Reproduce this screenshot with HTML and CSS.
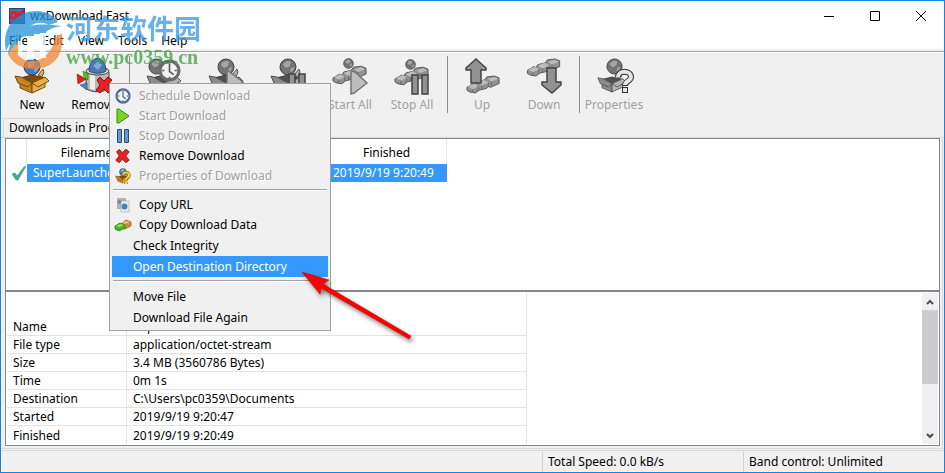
FILE: index.html
```html
<!DOCTYPE html>
<html lang="en">
<head>
    <meta charset="UTF-8">
    <meta name="viewport" content="width=device-width, initial-scale=1.0">
    <title>wxDownload Fast</title>
    <link rel="stylesheet" href="styles.css">
</head>
<body>
    <!-- shared icon parts -->
    <svg class="defs" aria-hidden="true">
        <symbol id="ball" viewBox="0 0 18 18">
            <circle class="ball" cx="9" cy="9" r="8"/>
            <path class="ball-light" d="M4 7c1-4 6-5 8-3l-1 4-4 2zM12 10l3-1-1 4-3 1z"/>
        </symbol>
        <symbol id="box" viewBox="0 0 36 26">
            <path class="box-dark" d="M6 10l12-3 13 3-13 6z"/>
            <path class="box-side" d="M6 11l12 5v9L6 20z"/>
            <path class="box-front" d="M18 16l13-6v9l-13 6z"/>
            <path class="box-side" d="M1 8l6 1 11 6-4 4-10-4z"/>
            <path class="box-front" d="M18 15l13-6 4 4-11 6z"/>
            <path class="box-front" d="M24 7l5-6 1 3-2 5z"/>
        </symbol>
        <symbol id="bricks" viewBox="0 0 36 20">
            <path class="brick" d="M1 13l7-4 2 1 2-3 8-2 2-3 8-1 5 2v6l-9 4-3-1-1 2-8 2-4 3-6-1-3-2z"/>
            <path class="brick-top" d="M2 12l7-3 4 3-6 3zM12 8l7-3 5 3-7 3zM23 4l7-2 4 2-7 3z"/>
            <path class="brick-line" d="M7 15v4M17 11v4M27 7v4M13 12v4M24 8v3"/>
        </symbol>
        <symbol id="clock" viewBox="0 0 22 22">
            <circle class="clock-rim" cx="11" cy="11" r="9"/>
            <path class="clock-hand" d="M11 4v8l4 3M11 17v2M4 11h2M16 11h2"/>
        </symbol>
        <symbol id="cross" viewBox="0 0 18 18">
            <path class="cross" d="M2 4l3-3 4 4 4-4 4 3-4 5 4 5-4 3-4-4-4 4-4-3 4-5z"/>
        </symbol>
        <symbol id="question" viewBox="0 0 20 26">
            <path class="q-edge" d="M4 9c0-7 13-7 13 0 0 4-6 4-6 9M11 19v6"/>
            <path class="q-fill" d="M4 9c0-7 13-7 13 0 0 4-6 4-6 8M11 20v4"/>
        </symbol>
    </svg>

    <div class="window">
        <header class="titlebar">
            <svg class="app-icon" viewBox="0 0 16 16">
                <rect x=".5" y=".5" width="15" height="15" fill="#4672ad" stroke="#26426d"/>
                <path d="M1 15L15 1v14z" fill="#315485"/>
                <path d="M2 3h4c4 0 3 8-1 8H1zM4 5L3 9c4 1 4-4 1-4zM9 4h6v2h-4v2h3v2h-3l-1 3H8z" fill="#f0161b" fill-rule="evenodd"/>
            </svg>
            <h1 class="title">wxDownload Fast</h1>
            <button class="win-btn" aria-label="Minimize"><svg viewBox="0 0 10 10"><path d="M0 5.5h10"/></svg></button>
            <button class="win-btn" aria-label="Maximize"><svg viewBox="0 0 10 10"><path d="M.5.5h9v9h-9z"/></svg></button>
            <button class="win-btn" aria-label="Close"><svg viewBox="0 0 10 10"><path d="M0 0l10 10M10 0L0 10"/></svg></button>
        </header>

        <nav class="menubar">
            <button>File</button>
            <button>Edit</button>
            <button>View</button>
            <button>Tools</button>
            <button>Help</button>
        </nav>

        <div class="toolbar">
            <button class="tool">
                <svg viewBox="0 0 36 36">
                    <use href="#box" y="10" width="36" height="26"/>
                    <use href="#ball" x="9" width="18" height="18"/>
                </svg>
                New
            </button>
            <button class="tool">
                <svg viewBox="0 0 36 36">
                    <path d="M10 14v16c4 5 19 5 23 0V14z" fill="#b9b9b9" stroke="#444"/>
                    <path d="M14 16v15l5 1V17z" fill="#eee"/>
                    <ellipse cx="21.5" cy="13" rx="11.5" ry="4" fill="#ddd" stroke="#444"/>
                    <path d="M13 13a8 12 0 0 1 17 0c-4 3-13 3-17 0z" fill="#4a78b5" stroke="#29466f"/>
                    <path d="M17 8l5-5 4 4-4 5z" fill="#7ea8d8"/>
                    <path d="M1 16l9 5-8 5z" fill="#dd2222" stroke="#7c1111" stroke-width=".6"/>
                    <path d="M7 13l5 3v6l-4-3z" fill="#58c51d" stroke="#286a08" stroke-width=".6"/>
                    <path d="M4 27l7-2v7z" fill="#4c86c8" stroke="#29466f" stroke-width=".6"/>
                    <use href="#cross" x="19" y="18" width="18" height="18"/>
                </svg>
                Remove
            </button>
            <hr class="tool-sep">
            <button class="tool" disabled>
                <svg viewBox="0 0 36 36">
                    <use href="#box" y="10" width="36" height="26"/>
                    <use href="#ball" x="2" width="17" height="17"/>
                    <use href="#clock" x="12" y="1" width="23" height="23"/>
                </svg>
                Schedule
            </button>
            <button class="tool" disabled>
                <svg viewBox="0 0 36 36">
                    <use href="#box" y="10" width="36" height="26"/>
                    <use href="#ball" x="9" width="18" height="18"/>
                    <path class="mark" d="M19 12l16 12-16 11z"/>
                </svg>
                Start
            </button>
            <button class="tool" disabled>
                <svg viewBox="0 0 36 36">
                    <use href="#box" y="10" width="36" height="26"/>
                    <use href="#ball" x="9" width="18" height="18"/>
                    <path class="mark-dark" d="M19 16h6v19h-6zM29 16h6v19h-6z"/>
                </svg>
                Stop
            </button>
            <button class="tool" disabled>
                <svg viewBox="0 0 36 36">
                    <use href="#ball" x="11" width="11" height="11"/>
                    <use href="#bricks" y="7" width="35" height="20"/>
                    <path class="mark" d="M19 13l4 1 12 11-13 10-3 1z"/>
                </svg>
                Start All
            </button>
            <button class="tool" disabled>
                <svg viewBox="0 0 36 36">
                    <use href="#ball" x="11" y="1" width="11" height="11"/>
                    <use href="#bricks" y="8" width="35" height="20"/>
                    <path class="mark-dark" d="M18 17h6v19h-6zM28 17h6v19h-6z"/>
                </svg>
                Stop All
            </button>
            <hr class="tool-sep">
            <button class="tool" disabled>
                <svg viewBox="0 0 36 36">
                    <use href="#bricks" x="2" y="17" width="34" height="19"/>
                    <path class="mark-dark" d="M12 1l10 9v2h-5v13H7V12H2v-2z"/>
                </svg>
                Up
            </button>
            <button class="tool" disabled>
                <svg viewBox="0 0 36 36">
                    <use href="#bricks" width="35" height="19"/>
                    <path class="mark-dark" d="M21 10h9v14h5v3l-9 8-10-8v-3h5z"/>
                </svg>
                Down
            </button>
            <hr class="tool-sep">
            <button class="tool" disabled>
                <svg viewBox="0 0 36 36">
                    <use href="#box" x="1" y="13" width="30" height="22"/>
                    <use href="#ball" x="10" width="17" height="17"/>
                    <use href="#question" x="18" y="10" width="20" height="26"/>
                </svg>
                Properties
            </button>
        </div>

        <div class="tabs">
            <button class="tab">Downloads in Progress</button>
        </div>

        <main class="content">
            <section class="list">
                <table class="downloads">
                    <thead>
                        <tr>
                            <th class="col-state"></th>
                            <th class="col-name">Filename</th>
                            <th class="col-mid"></th>
                            <th class="col-end">Finished</th>
                        </tr>
                    </thead>
                    <tbody>
                        <tr>
                            <td class="state">
                                <svg viewBox="0 0 14 14"><path d="M0 8l3-1 2 3 7-9 2-1-8 14H4z" fill="#3fae8e" stroke="#2b8c70" stroke-width=".5"/></svg>
                            </td>
                            <td>SuperLauncherSetu.rar</td>
                            <td></td>
                            <td>2019/9/19 9:20:49</td>
                        </tr>
                    </tbody>
                </table>
            </section>

            <section class="details">
                <table class="info">
                    <tbody>
                        <tr class="info-head"><th></th><td></td></tr>
                        <tr><th>Name</th><td>SuperLauncherSetu.rar</td></tr>
                        <tr><th>File type</th><td>application/octet-stream</td></tr>
                        <tr><th>Size</th><td>3.4 MB (3560786 Bytes)</td></tr>
                        <tr><th>Time</th><td>0m 1s</td></tr>
                        <tr><th>Destination</th><td>C:\Users\pc0359\Documents</td></tr>
                        <tr><th>Started</th><td>2019/9/19 9:20:47</td></tr>
                        <tr><th>Finished</th><td>2019/9/19 9:20:49</td></tr>
                    </tbody>
                </table>
                <div class="scrollbar">
                    <button aria-label="Scroll up"><svg viewBox="0 0 8 6"><path d="M1 5l3-3 3 3"/></svg></button>
                    <div class="thumb"></div>
                    <button aria-label="Scroll down"><svg viewBox="0 0 8 6"><path d="M1 1l3 3 3-3"/></svg></button>
                </div>
            </section>
        </main>

        <footer class="statusbar">
            <span class="status-main"></span>
            <span class="status">Total Speed: 0.0 kB/s</span>
            <span class="status">Band control: Unlimited</span>
        </footer>
    </div>

    <div class="watermark">
        <svg viewBox="0 0 58 58">
            <path d="M1 40C-4 18 10 0 32 0c10 0 17 5 21 11L44 14c-8-4-16-2-21 3C13 21 6 29 1 40z" fill="#2292d8"/>
            <path d="M13 22c8-9 23-10 44-7-7 1-13 3-16 6v26h-6V23h-6v24h-7V25c-4 0-8 3-10 7L3 44c1-9 4-16 10-22z" fill="#2292d8"/>
            <path d="M3 43c3-5 6-9 10-12v13c6 7 17 9 26 2 7-6 10-12 11-19 3-4 7-4 7-4 3 19-8 35-28 35C17 58 8 53 3 43z" fill="#f48634"/>
            <path d="M22 25h7v24h-7zM35 22h6v25h-6zM13 30h4v14h-4z" fill="#fff"/>
        </svg>
        <div>
            <div class="wm-name" lang="zh-CN">河东软件园</div>
            <div class="wm-url">www.pc0359.cn</div>
        </div>
    </div>

    <div class="context-menu">
        <button class="item" disabled>
            <svg viewBox="0 0 16 16"><use href="#clock" width="16" height="16"/></svg>
            Schedule Download
        </button>
        <button class="item" disabled>
            <svg viewBox="0 0 16 16"><path d="M2 1h2l10 7-10 7H2z" fill="#79d51e" stroke="#348b0d"/></svg>
            Start Download
        </button>
        <button class="item" disabled>
            <svg viewBox="0 0 16 16"><path d="M2.500 1.500h4v13h-4zM9.500 1.500h4v13h-4z" fill="#6798cf" stroke="#284d80"/></svg>
            Stop Download
        </button>
        <button class="item">
            <svg viewBox="0 0 16 16"><use href="#cross" width="15" height="16"/></svg>
            Remove Download
        </button>
        <button class="item" disabled>
            <svg viewBox="0 0 16 16">
                <use href="#box" y="4" width="15" height="12"/>
                <use href="#ball" x="4" width="8" height="8"/>
                <path d="M8 7c1-4 7-3 6 1-1 2-3 1-3 4M11 14v2" fill="none" stroke="#6b4c00" stroke-width="3"/>
                <path d="M8 7c1-4 7-3 6 1-1 2-3 1-3 4M11 14v2" fill="none" stroke="#ffd42a" stroke-width="2"/>
            </svg>
            Properties of Download
        </button>
        <hr>
        <button class="item">
            <svg viewBox="0 0 16 16">
                <path d="M2 1h9v11H2z" fill="#a9b2b8"/>
                <path d="M6 4h8v11H6z" fill="#e8edf1" stroke="#a2a9ae" stroke-width=".6"/>
                <circle cx="4.500" cy="5" r="2" fill="#728ca8"/>
                <circle cx="9.500" cy="9.500" r="3" fill="#4a7fbd"/>
            </svg>
            Copy URL
        </button>
        <button class="item">
            <svg viewBox="0 0 16 16">
                <path d="M6 7l5-4 5 2v4l-6 3-4-1z" fill="#d58b42" stroke="#86531d" stroke-width=".7"/>
                <path d="M7 6l4-2 4 1-4 2z" fill="#eebd82"/>
                <path d="M0 9l5-3 5 2v3l-6 3-4-2z" fill="#4db41d" stroke="#28700b" stroke-width=".7"/>
                <path d="M1 9l4-2 4 1-4 2z" fill="#92e35c"/>
            </svg>
            Copy Download Data
        </button>
        <button class="item plain">Check Integrity</button>
        <button class="item plain active">Open Destination Directory</button>
        <hr>
        <button class="item plain">Move File</button>
        <button class="item plain">Download File Again</button>
    </div>

    <svg class="pointer" viewBox="0 0 112 72" aria-hidden="true">
        <path d="M1 1l27 8-6 4 88 52-2 3-88-51-1 6z" fill="#f00" stroke="#c40000" stroke-width=".5"/>
    </svg>
</body>
</html>
```
FILE: styles.css
```css
* {
    box-sizing: border-box;
}
body {
    margin: 0;
    font: 12px/18px "Noto Sans", "Noto Sans CJK SC", sans-serif;
    color: #000;
}
button {
    margin: 0;
    padding: 0;
    border: none;
    background: none;
    font: inherit;
    color: inherit;
}
svg {
    display: block;
    overflow: visible;
}
.defs {
    position: absolute;
    width: 0;
    height: 0;
}
.window {
    display: flex;
    flex-direction: column;
    height: 100vh;
    min-height: 420px;
    border: 1px solid #1883d7;
    background: #f0f0f0;
}

/* title and menus */
.titlebar {
    display: flex;
    align-items: center;
    height: 30px;
    padding-left: 8px;
    background: #fff;
}
.app-icon {
    width: 16px;
    height: 16px;
}
.title {
    flex: 1;
    margin: 0 0 0 5px;
    font-size: 12px;
    font-weight: normal;
}
.win-btn {
    display: flex;
    align-items: center;
    justify-content: center;
    width: 46px;
    height: 30px;
}
.win-btn svg {
    width: 10px;
    height: 10px;
    fill: none;
    stroke: #000;
}
.menubar {
    display: flex;
    height: 21px;
    padding-left: 1px;
    background: #fff;
    border-bottom: 1px solid #a0a0a0;
    box-shadow: inset 0 -2px #f0f0f0;
}
.menubar button {
    padding: 0 7px;
}

/* toolbar */
.toolbar {
    display: flex;
    height: 66px;
    padding-top: 3px;
    border-top: 1px solid #fff;
}
.tool {
    display: flex;
    flex-direction: column;
    align-items: center;
    width: 62px;
    padding-top: 2px;
    white-space: nowrap;
}
.tool svg {
    width: 36px;
    height: 36px;
    margin-bottom: 2px;
}
.tool:disabled {
    color: #a0a0a0;
}
.tool:disabled svg {
    filter: grayscale(1);
}
.tool-sep {
    width: 1px;
    height: 57px;
    margin: 0 3px 0 4px;
    border: none;
    background: #8c8c8c;
}

/* icon colours */
.ball { fill: #4a78b5; stroke: #29466f; }
.ball-light { fill: #82aadb; }
.box-dark { fill: #7c4c08; stroke: #5d3905; }
.box-side { fill: #c98422; stroke: #7c4c08; }
.box-front { fill: #e8ad4c; stroke: #7c4c08; }
.clock-rim { fill: #eef2f6; stroke: #506e96; stroke-width: 3; }
.clock-hand { fill: none; stroke: #46566c; stroke-width: 1.5; }
.cross { fill: #e62222; stroke: #8e0d0d; }
.brick { fill: #929292; stroke: #555; }
.brick-top { fill: #bcbcbc; }
.brick-line { fill: none; stroke: #6a6a6a; }
.mark { fill: #bdbdbd; stroke: #757575; stroke-width: 1.5; }
.mark-dark { fill: #929292; stroke: #444; stroke-width: 1.5; }
.q-edge { fill: none; stroke: #333; stroke-width: 6; }
.q-fill { fill: none; stroke: #e4e4e4; stroke-width: 4; }

/* notebook */
.tabs {
    display: flex;
    height: 20px;
    padding-left: 2px;
    border-bottom: 1px solid #d9d9d9;
}
.tab {
    padding: 0 6px 0 5px;
    border: 1px solid #d9d9d9;
    border-bottom: none;
}
.content {
    flex: 1;
    display: flex;
    flex-direction: column;
    min-height: 0;
    margin-right: 1px;
    padding: 0 2px 2px 4px;
    border-right: 1px solid #d9d9d9;
    border-bottom: 1px solid #d9d9d9;
}
.list,
.details {
    flex: 1 1 0;
    min-height: 0;
    overflow: hidden;
    background: #fff;
    border: 1px solid #828790;
}
table {
    border-collapse: separate;
    border-spacing: 0;
}
th {
    font-weight: normal;
}
th,
td {
    padding: 0 6px;
    white-space: nowrap;
}
.downloads {
    table-layout: fixed;
    width: 441px;
}
.downloads th {
    height: 25px;
    padding-top: 3px;
    border-right: 1px solid #e5e5e5;
}
.downloads td {
    height: 18px;
    color: #fff;
    background: #3399ff;
}
.downloads td.state {
    background: #fff;
}
.state svg {
    width: 14px;
    height: 14px;
}
.col-state { width: 21px; }
.col-name { width: 120px; }
.col-mid { width: 180px; }
.details {
    display: flex;
    justify-content: space-between;
    padding: 1px;
}
.info {
    table-layout: fixed;
    width: 520px;
    height: 0;
}
.info th {
    width: 120px;
    text-align: left;
}
.info th,
.info td {
    height: 18px;
    line-height: 17px;
    border-right: 1px solid #e3e3e3;
    border-bottom: 1px solid #e3e3e3;
}
.info .info-head th,
.info .info-head td {
    height: 25px;
    border-bottom: none;
}
.info tr:last-child th,
.info tr:last-child td {
    border-bottom: none;
}
.scrollbar {
    display: flex;
    flex-direction: column;
    width: 16px;
    background: #f0f0f0;
}
.scrollbar button {
    display: flex;
    align-items: center;
    justify-content: center;
    height: 17px;
}
.scrollbar svg {
    width: 8px;
    height: 6px;
    fill: none;
    stroke: #505050;
    stroke-width: 2;
}
.scrollbar .thumb {
    height: 74px;
    margin-bottom: auto;
    background: #cdcdcd;
}

/* status bar */
.statusbar {
    display: flex;
    height: 22px;
    margin-top: 1px;
    padding-top: 1px;
    border-top: 1px solid #d9d9d9;
}
.status-main {
    flex: 1;
}
.status {
    width: 201px;
    padding-left: 5px;
    line-height: 20px;
    border-left: 1px solid #d0d0d0;
}

/* popup menu */
.context-menu {
    position: absolute;
    top: 83px;
    left: 109px;
    width: 222px;
    padding: 2px;
    background: #f0f0f0;
    border: 1px solid #a0a0a0;
}
.item {
    display: flex;
    align-items: center;
    gap: 8px;
    width: 100%;
    height: 20px;
    padding-left: 3px;
    text-align: left;
}
.item svg {
    width: 16px;
    height: 16px;
}
.item:disabled {
    color: #a0a0a0;
    text-shadow: 1px 1px #fff;
}
.item.plain {
    height: 21px;
    padding-left: 21px;
}
.item.active {
    color: #fff;
    background: #3399ff;
}
.context-menu hr {
    height: 2px;
    margin: 3px 1px 4px;
    border: none;
    border-top: 1px solid #a0a0a0;
    background: #fff;
}

.watermark {
    position: absolute;
    top: 11px;
    left: 5px;
    display: flex;
    gap: 3px;
    opacity: 0.75;
    pointer-events: none;
}
.watermark svg {
    width: 58px;
    height: 58px;
}
.wm-name {
    font: bold 27px/34px "Noto Sans CJK SC", sans-serif;
    color: #3498e6;
}
.wm-url {
    font: bold 20px/24px "Liberation Serif", serif;
    color: #3fa03f;
}
.pointer {
    position: absolute;
    top: 271px;
    left: 301px;
    width: 112px;
    height: 72px;
    filter: drop-shadow(2px 3px 2px rgba(0,0,0,0.5));
}
```
